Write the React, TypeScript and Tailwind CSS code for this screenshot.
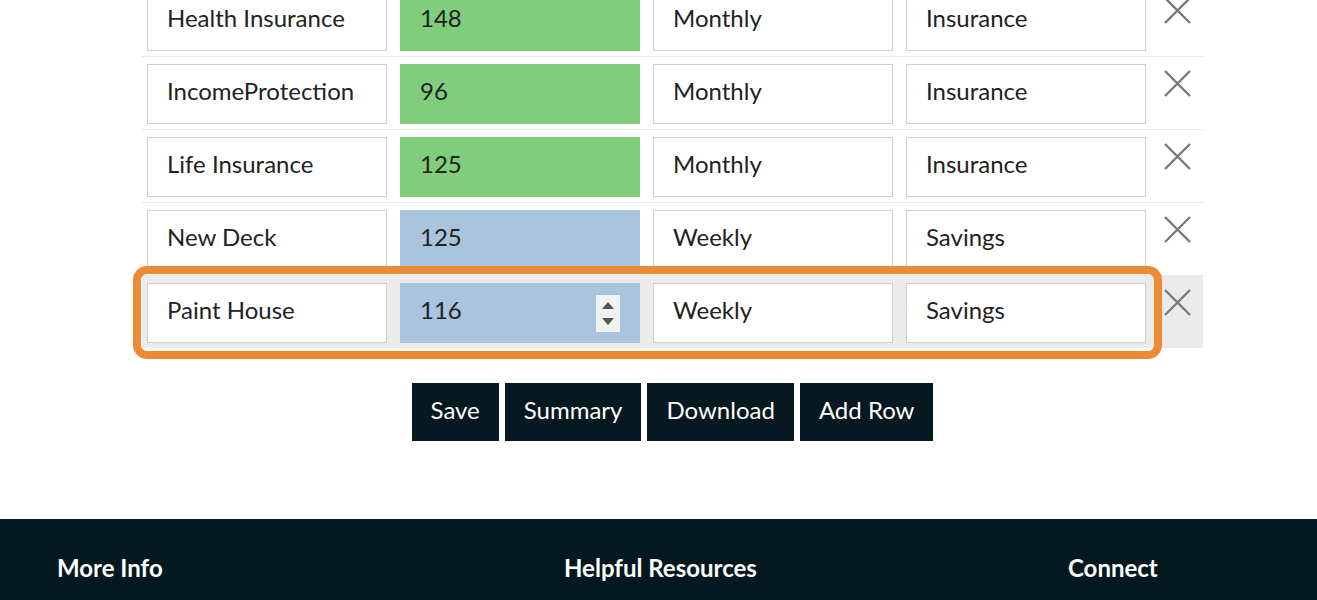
import React from "react";

type Row = {
  name: string;
  amount: number;
  freq: string;
  cat: string;
  kind: "green" | "blue";
};

const rows: Row[] = [
  { name: "Health Insurance", amount: 148, freq: "Monthly", cat: "Insurance", kind: "green" },
  { name: "IncomeProtection", amount: 96, freq: "Monthly", cat: "Insurance", kind: "green" },
  { name: "Life Insurance", amount: 125, freq: "Monthly", cat: "Insurance", kind: "green" },
  { name: "New Deck", amount: 125, freq: "Weekly", cat: "Savings", kind: "blue" },
  { name: "Paint House", amount: 116, freq: "Weekly", cat: "Savings", kind: "blue" },
];

function Cell({ children, className = "" }: { children: React.ReactNode; className?: string }) {
  return (
    <div
      className={`w-[240px] h-[60px] shrink-0 flex items-center pl-[19px] pb-[7px] border text-[24px] text-[#222] ${className}`}
    >
      {children}
    </div>
  );
}

function CloseIcon() {
  return (
    <svg width="29" height="29" viewBox="0 0 29 29" className="shrink-0">
      <path d="M2 2 L27 27 M27 2 L2 27" stroke="#7a7a7a" strokeWidth="2.4" fill="none" />
    </svg>
  );
}

function Spinner() {
  return (
    <div className="ml-auto mr-[19px] mt-[7px] w-[24px] h-[37px] bg-[#f2f2f2] flex flex-col items-center justify-center gap-[9px]">
      <div className="w-0 h-0 border-l-[6px] border-r-[6px] border-b-[7px] border-l-transparent border-r-transparent border-b-[#555]" />
      <div className="w-0 h-0 border-l-[6px] border-r-[6px] border-t-[7px] border-l-transparent border-r-transparent border-t-[#555]" />
    </div>
  );
}

export default function App() {
  return (
    <div className="w-[1317px] h-[600px] overflow-hidden bg-white font-['Lato','Liberation_Sans',sans-serif]">
      <div className="ml-[142px] w-[1061px] -mt-[17px]">
        {rows.map((r, i) => {
          const active = i === rows.length - 1;
          const amountBg =
            r.kind === "green"
              ? "bg-[#80cd7b] border-[#80cd7b]"
              : "bg-[#a9c4dc] border-[#a9c4dc]";
          return (
            <div
              key={r.name}
              className={`relative flex items-start gap-[13px] px-[5px] pt-[7px] pb-[5px] border-t border-[#e8e8e8] ${
                active ? "bg-[#ebebeb]" : ""
              }`}
            >
              <Cell className="bg-white border-[#cfcfcf]">{r.name}</Cell>
              <Cell className={amountBg}>
                <span>{r.amount}</span>
                {active && <Spinner />}
              </Cell>
              <Cell className="bg-white border-[#cfcfcf]">{r.freq}</Cell>
              <Cell className="bg-white border-[#cfcfcf]">{r.cat}</Cell>
              <div className="ml-[4px] mt-[5px]">
                <CloseIcon />
              </div>
              {active && (
                <div className="absolute -top-[10px] -left-[9px] w-[1029px] h-[93px] border-8 border-[#ec8b36] rounded-[14px] pointer-events-none" />
              )}
            </div>
          );
        })}

        <div className="mt-[35px] flex justify-center gap-[6px]">
          {["Save", "Summary", "Download", "Add Row"].map((b) => (
            <button
              key={b}
              className="h-[58px] px-[19px] pb-[4px] bg-[#061820] text-white text-[24px] leading-none"
            >
              {b}
            </button>
          ))}
        </div>
      </div>

      <footer className="mt-[78px] h-[120px] bg-[#041820] pt-[31px] pl-[57px]">
        <div className="grid grid-cols-[507px_504px_auto] text-white text-[24px] font-bold">
          <div>More Info</div>
          <div>Helpful Resources</div>
          <div>Connect</div>
        </div>
      </footer>
    </div>
  );
}
